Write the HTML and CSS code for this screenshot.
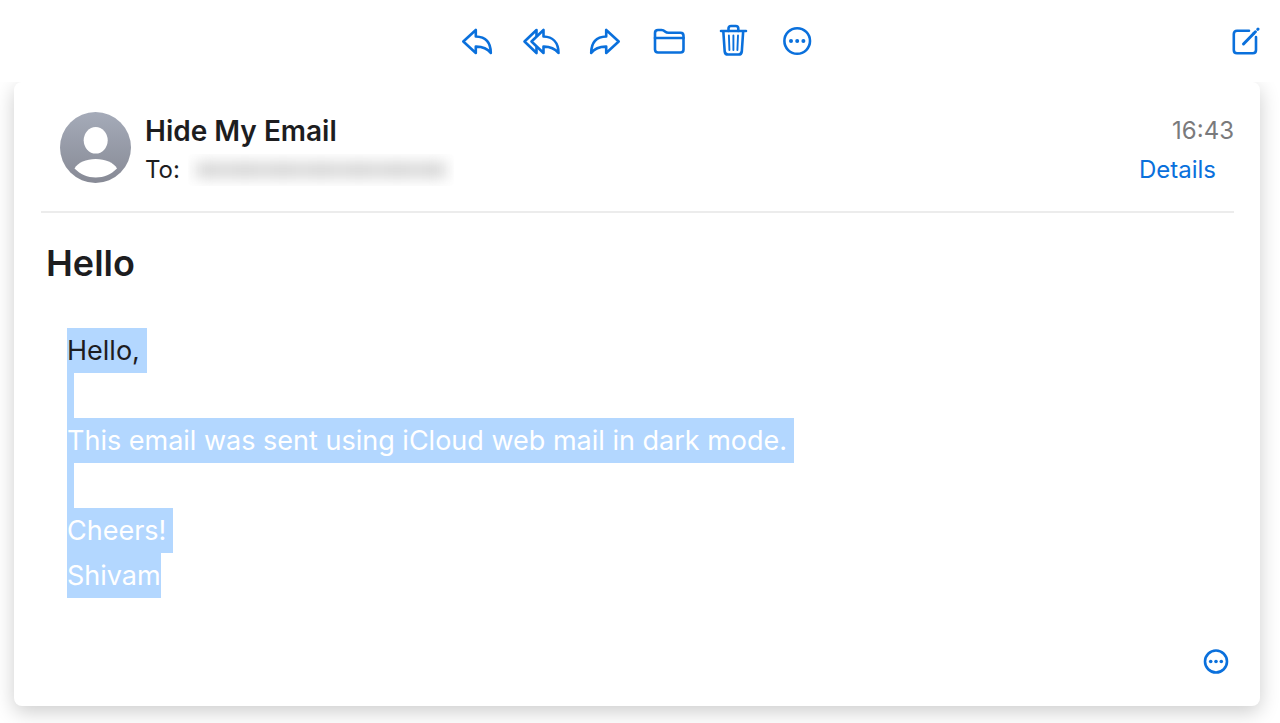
FILE: index.html
```html
<!DOCTYPE html>
<html lang="en">
<head>
    <meta charset="UTF-8">
    <meta name="viewport" content="width=device-width, initial-scale=1.0">
    <title>Hello</title>
    <link rel="stylesheet" href="styles.css">
</head>
<body>
    <header class="toolbar">
        <nav class="toolbar-actions" aria-label="Message actions">
            <button type="button" class="icon-button" aria-label="Reply">
                <svg class="icon" width="40" height="40" viewBox="0 0 40 40">
                    <path d="M6.300 20.500L18.800 9V15.500C28.500 15.800 33.800 21.500 33.800 32C30 27 26 25.500 18.800 25.600V32Z"/>
                </svg>
            </button>
            <button type="button" class="icon-button" aria-label="Reply all">
                <svg class="icon" width="40" height="40" viewBox="0 0 40 40">
                    <path d="M10.500 20.500L22.500 9V15.500C31.500 15.800 37.500 21.500 37.500 32C33.500 27 29.500 25.500 22.500 25.600V32Z"/>
                    <path d="M15.500 14.500V9L3.500 20.500L15.500 32V26.500"/>
                </svg>
            </button>
            <button type="button" class="icon-button" aria-label="Forward">
                <svg class="icon icon-flip" width="40" height="40" viewBox="0 0 40 40">
                    <path d="M6.300 20.500L18.800 9V15.500C28.500 15.800 33.800 21.500 33.800 32C30 27 26 25.500 18.800 25.600V32Z"/>
                </svg>
            </button>
            <button type="button" class="icon-button" aria-label="Move to folder">
                <svg class="icon" width="40" height="40" viewBox="0 0 40 40">
                    <path d="M6 28.500V12Q6 9 9 9H12.500Q14.500 9 16 10.500Q17.500 11.800 19.500 11.800H31.500Q34.500 11.800 34.500 14.800V28.500Q34.500 31.500 31.500 31.500H9Q6 31.500 6 28.500Z"/>
                    <path d="M6 17H34.500"/>
                </svg>
            </button>
            <button type="button" class="icon-button" aria-label="Delete">
                <svg class="icon" width="40" height="40" viewBox="0 0 40 40">
                    <path d="M8 10H33M10.300 10L11.700 30.500Q12 33.500 15 33.500H25.500Q28.500 33.500 28.800 30.500L30.200 10"/>
                    <path d="M15.500 10V7.500Q15.500 5 18 5H22.800Q25.300 5 25.300 7.500V10"/>
                    <path class="thin" d="M15.900 14.500L16.400 29M20.400 14.500V29M25 14.500L24.400 29"/>
                </svg>
            </button>
            <button type="button" class="icon-button" aria-label="More">
                <svg class="icon" width="40" height="40" viewBox="0 0 40 40">
                    <circle cx="20.200" cy="20" r="12.800"/>
                    <g class="dots">
                        <circle cx="14" cy="20" r="2"/>
                        <circle cx="20.200" cy="20" r="2"/>
                        <circle cx="26.400" cy="20" r="2"/>
                    </g>
                </svg>
            </button>
        </nav>
        <button type="button" class="icon-button compose" aria-label="New message">
            <svg class="icon" width="32" height="32" viewBox="0 0 32 32">
                <path d="M21 5.800H9Q5.800 5.800 5.800 9V25Q5.800 28.200 9 28.200H24.800Q28 28.200 28 25V12"/>
                <path class="pencil" d="M15.500 19L25.500 8.700"/>
                <path class="pencil" d="M26 8.200L27.400 6.800M29.800 4.300L30 4.100"/>
            </svg>
        </button>
    </header>

    <main class="message">
        <div class="message-header">
            <svg class="avatar" width="71" height="71" viewBox="0 0 71 71" aria-hidden="true">
                <defs>
                    <linearGradient id="avatarFill" x1="0" y1="0" x2="0" y2="1">
                        <stop offset="0" stop-color="#a5abb9"/>
                        <stop offset="1" stop-color="#878a95"/>
                    </linearGradient>
                </defs>
                <circle cx="35.500" cy="35.500" r="35.500" fill="url(#avatarFill)"/>
                <ellipse cx="35.700" cy="28.300" rx="12" ry="13.300" fill="#fff"/>
                <path d="M14.500 56.500C18 50.500 26 47 35.700 47S53.500 50.500 57 56.500C51 62.500 44 65.500 35.700 65.500S20.500 62.500 14.500 56.500Z" fill="#fff"/>
            </svg>
            <div class="sender">
                <div class="sender-name">Hide My Email</div>
                <div class="recipient">To: <span class="address" role="img" aria-label="Hidden address"></span></div>
            </div>
            <div class="meta">
                <time datetime="16:43">16:43</time>
                <a href="#" class="details">Details</a>
            </div>
        </div>

        <h1>Hello</h1>

        <div class="message-body">
            <p><span class="selected dark">Hello,</span></p>
            <p><span class="selected"></span></p>
            <p><span class="selected">This email was sent using iCloud web mail in dark mode.</span></p>
            <p><span class="selected"></span></p>
            <p><span class="selected">Cheers!</span></p>
            <p><span class="selected last">Shivam</span></p>
        </div>

        <div class="message-footer">
            <button type="button" class="icon-button" aria-label="Message options">
                <svg class="icon" width="32" height="32" viewBox="0 0 32 32">
                    <circle cx="16" cy="15.500" r="11"/>
                    <g class="dots">
                        <circle cx="10.700" cy="15.500" r="1.800"/>
                        <circle cx="16" cy="15.500" r="1.800"/>
                        <circle cx="21.300" cy="15.500" r="1.800"/>
                    </g>
                </svg>
            </button>
        </div>
    </main>
</body>
</html>
```
FILE: styles.css
```css
* {
    box-sizing: border-box;
}

body {
    margin: 0;
    padding: 0 20px 17px 14px;
    font-family: Inter, "Liberation Sans", sans-serif;
    font-size: 24px;
    color: #1d1d1f;
    background: #fff;
}

/* Toolbar */
.toolbar {
    display: grid;
    grid-template-columns: 1fr auto 1fr;
    align-items: center;
    height: 82px;
}

.toolbar-actions {
    grid-column: 2;
    display: flex;
    gap: 24px;
}

.compose {
    justify-self: end;
}

.icon-button {
    display: block;
    padding: 0;
    border: none;
    background: none;
    color: #0a70dc;
    cursor: pointer;
}

.icon {
    display: block;
    fill: none;
    stroke: currentColor;
    stroke-width: 2.6;
    stroke-linecap: round;
    stroke-linejoin: round;
}

.icon-flip {
    transform: scaleX(-1);
}

.thin {
    stroke-width: 1.9;
}

.pencil {
    stroke-width: 3;
}

.dots {
    fill: currentColor;
    stroke: none;
}

/* Message card */
.message {
    padding: 0 26px 28px 27px;
    border-radius: 8px;
    background: #fff;
    box-shadow: 0 6px 20px rgba(0, 0, 0, 0.2);
    clip-path: inset(0 -20px -20px -20px);
}

.message-header {
    display: flex;
    gap: 14px;
    padding: 30px 0 21px 19px;
    border-bottom: 2px solid #ececec;
}

.sender {
    flex: 1;
}

.sender-name {
    font-size: 28px;
    font-weight: 600;
    line-height: 38px;
}

.recipient {
    display: flex;
    align-items: center;
    gap: 8px;
    line-height: 40px;
}

/* Blurred out address */
.address {
    width: 266px;
    height: 32px;
    padding: 8px;
    overflow: hidden;
}

.address::before {
    content: "";
    display: block;
    height: 16px;
    background: repeating-linear-gradient(to right, #d6d6d6 0, #d6d6d6 22px, #dedede 30px, #d6d6d6 38px);
    filter: blur(7px);
}

.meta {
    display: flex;
    flex-direction: column;
    align-items: flex-end;
    line-height: 38px;
}

.meta time {
    color: #7a7a7c;
}

.details {
    margin-right: 18px;
    line-height: 40px;
    color: #0a70dc;
    text-decoration: none;
}

h1 {
    margin: 28px 0 43px 5px;
    font-size: 36px;
    font-weight: 600;
    line-height: 44px;
}

.message-body {
    margin-left: 26px;
    font-size: 27px;
    line-height: 45px;
}

.message-body p {
    display: flex;
    min-height: 45px;
    margin: 0;
}

.selected {
    padding-right: 7px;
    color: #fff;
    background: #b3d7ff;
}

.dark {
    color: #1d1d1f;
}

.last {
    padding-right: 0;
}

.message-footer {
    display: flex;
    justify-content: flex-end;
    margin-top: 48px;
    padding-right: 2px;
}
```
